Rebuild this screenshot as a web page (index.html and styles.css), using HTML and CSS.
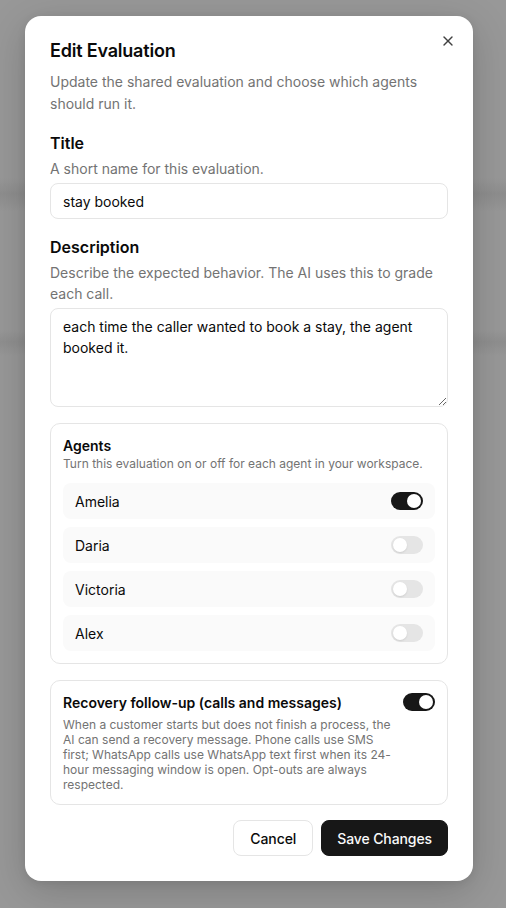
FILE: index.html
```html
<!DOCTYPE html>
<html lang="en">
<head>
    <meta charset="UTF-8">
    <meta name="viewport" content="width=device-width, initial-scale=1.0">
    <title>Edit Evaluation</title>
    <link rel="stylesheet" href="styles.css">
</head>
<body>
    <div class="overlay">
        <div class="modal">
            <button type="button" class="close-btn" aria-label="Close">
                <svg width="16" height="16" viewBox="0 0 24 24" fill="none" stroke="currentColor" stroke-width="2" stroke-linecap="round" stroke-linejoin="round">
                    <path d="M18 6 6 18"/>
                    <path d="m6 6 12 12"/>
                </svg>
            </button>
            <div class="modal-header">
                <h1>Edit Evaluation</h1>
                <p>Update the shared evaluation and choose which agents should run it.</p>
            </div>
            <form class="modal-form">
                <div class="form-group">
                    <label for="title">Title</label>
                    <p class="hint">A short name for this evaluation.</p>
                    <input type="text" id="title" value="stay booked">
                </div>
                <div class="form-group">
                    <label for="description">Description</label>
                    <p class="hint">Describe the expected behavior. The AI uses this to grade each call.</p>
                    <textarea id="description">each time the caller wanted to book a stay, the agent booked it.</textarea>
                </div>
                <div class="card">
                    <h3>Agents</h3>
                    <p class="card-hint">Turn this evaluation on or off for each agent in your workspace.</p>
                    <div class="agent-list">
                        <div class="agent-row">
                            <span>Amelia</span>
                            <span class="switch on"></span>
                        </div>
                        <div class="agent-row">
                            <span>Daria</span>
                            <span class="switch"></span>
                        </div>
                        <div class="agent-row">
                            <span>Victoria</span>
                            <span class="switch"></span>
                        </div>
                        <div class="agent-row">
                            <span>Alex</span>
                            <span class="switch"></span>
                        </div>
                    </div>
                </div>
                <div class="card recovery">
                    <div class="recovery-text">
                        <h3>Recovery follow-up (calls and messages)</h3>
                        <p class="recovery-desc">When a customer starts but does not finish a process, the AI can send a recovery message. Phone calls use SMS first; WhatsApp calls use WhatsApp text first when its 24-hour messaging window is open. Opt-outs are always respected.</p>
                    </div>
                    <span class="switch on"></span>
                </div>
                <div class="modal-footer">
                    <button type="button" class="btn btn-outline">Cancel</button>
                    <button type="button" class="btn btn-primary">Save Changes</button>
                </div>
            </form>
        </div>
    </div>
</body>
</html>
```

FILE: styles.css
```css
* {
    box-sizing: border-box;
}
body {
    margin: 0;
    font-family: 'Inter', 'Noto Sans', sans-serif;
    color: #0a0a0a;
    background: linear-gradient(180deg, #989898 0, #989898 178px, #8e8e8e 194px, #989898 212px, #989898 330px, #8f8f8f 342px, #989898 356px, #989898 100%);
    height: 908px;
    overflow: hidden;
}
.overlay {
    padding: 16px 0 0 25px;
}
.modal {
    position: relative;
    width: 448px;
    background: #fff;
    border-radius: 16px;
    padding: 24px 25px 25px 25px;
    box-shadow: 0 10px 40px rgba(0, 0, 0, 0.18), 0 2px 8px rgba(0, 0, 0, 0.08);
}
.close-btn {
    position: absolute;
    top: 17px;
    right: 17px;
    width: 16px;
    height: 16px;
    padding: 0;
    border: none;
    background: none;
    color: #404040;
    cursor: pointer;
}
.modal-header h1 {
    margin: 0;
    font-size: 18px;
    line-height: 22px;
    font-weight: 600;
    letter-spacing: -0.2px;
}
.modal-header p {
    margin: 9px 0 0;
    font-size: 14px;
    line-height: 22px;
    color: #737373;
}
.modal-form {
    margin-top: 16px;
}
.form-group {
    margin-bottom: 16px;
}
label {
    display: block;
    font-size: 16px;
    line-height: 24px;
    font-weight: 600;
}
.hint {
    margin: 3px 0 4px;
    font-size: 14px;
    line-height: 21px;
    color: #737373;
}
input, textarea {
    width: 100%;
    font-family: inherit;
    font-size: 14px;
    color: #0a0a0a;
    border: 1px solid #e5e5e5;
    border-radius: 8px;
    outline: none;
    background: #fff;
}
input {
    height: 36px;
    padding: 0 12px;
}
textarea {
    display: block;
    height: 99px;
    padding: 7px 12px;
    line-height: 21px;
}
.card {
    border: 1px solid #e5e5e5;
    border-radius: 10px;
    padding: 12px;
    margin-bottom: 16px;
}
.card h3 {
    margin: 0;
    font-size: 14px;
    line-height: 20px;
    font-weight: 600;
}
.card-hint {
    margin: 0;
    font-size: 12px;
    line-height: 16px;
    color: #737373;
}
.agent-list {
    margin-top: 11px;
    display: flex;
    flex-direction: column;
    gap: 8px;
}
.agent-row {
    height: 36px;
    display: flex;
    align-items: center;
    justify-content: space-between;
    padding: 0 12px;
    background: #fafafa;
    border-radius: 8px;
    font-size: 14px;
}
.switch {
    position: relative;
    flex-shrink: 0;
    width: 32px;
    height: 18px;
    border-radius: 9px;
    background: #e5e5e5;
}
.switch::after {
    content: '';
    position: absolute;
    top: 2px;
    left: 2px;
    width: 14px;
    height: 14px;
    border-radius: 50%;
    background: #fff;
    box-shadow: 0 1px 2px rgba(0, 0, 0, 0.1);
}
.switch.on {
    background: #171717;
}
.switch.on::after {
    left: 16px;
}
.recovery {
    display: flex;
    align-items: flex-start;
    gap: 12px;
}
.recovery-text {
    flex: 1;
}
.recovery-desc {
    margin: 4px 0 0;
    font-size: 12px;
    line-height: 15px;
    color: #737373;
}
.modal-footer {
    display: flex;
    justify-content: flex-end;
    gap: 8px;
    margin-top: -1px;
}
.btn {
    height: 36px;
    padding: 0 16px;
    font-family: inherit;
    font-size: 14px;
    font-weight: 500;
    letter-spacing: -0.1px;
    border-radius: 8px;
    cursor: pointer;
}
.btn-outline {
    background: #fff;
    color: #0a0a0a;
    border: 1px solid #e5e5e5;
}
.btn-primary {
    padding: 0 15px;
    background: #171717;
    color: #fafafa;
    border: 1px solid #171717;
}
```
